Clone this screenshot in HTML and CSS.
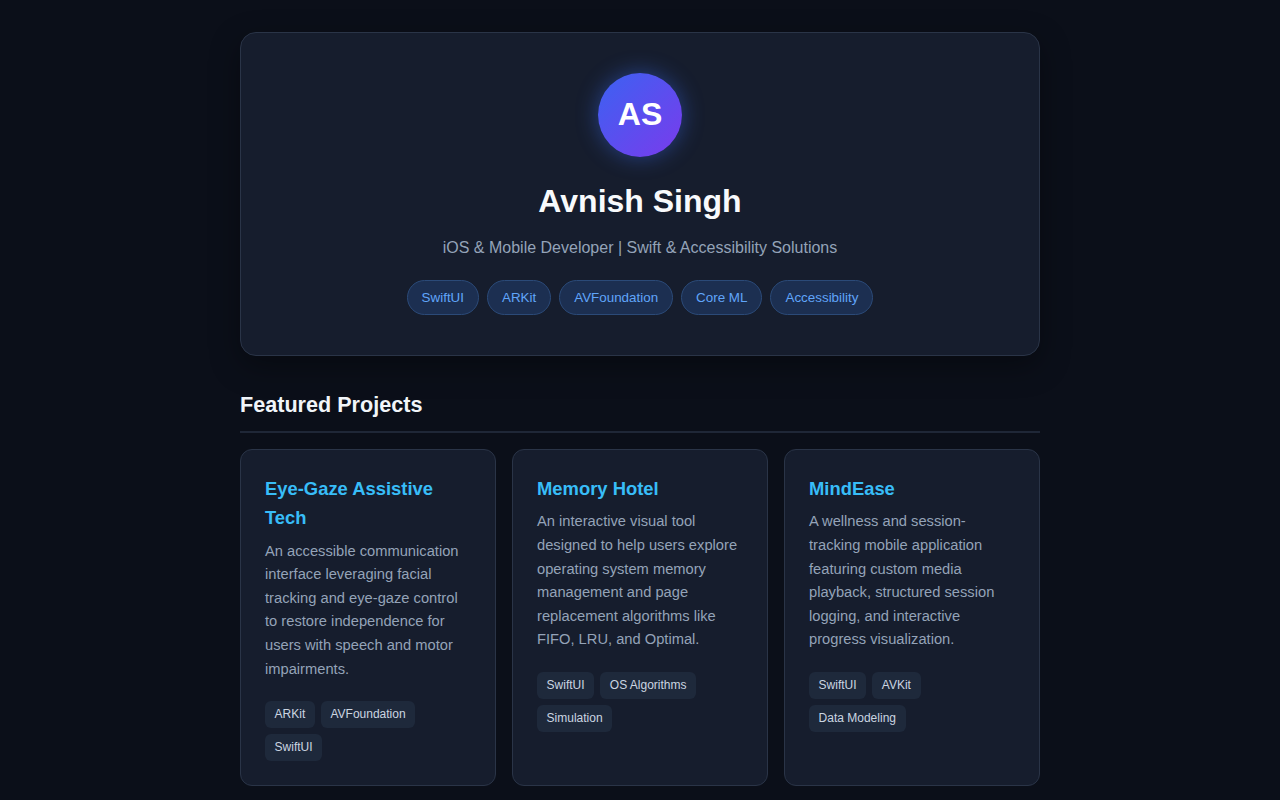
FILE: index.html
```html
<!DOCTYPE html>
<html lang="en">
<head>
<meta charset="utf-8">
<title>Avnish Singh</title>
<link rel="stylesheet" href="styles.css">
</head>
<body>
<main class="page">
  <section class="profile">
    <div class="avatar">AS</div>
    <h1 class="name">Avnish Singh</h1>
    <p class="tagline">iOS &amp; Mobile Developer | Swift &amp; Accessibility Solutions</p>
    <div class="skills">
      <span class="skill">SwiftUI</span>
      <span class="skill">ARKit</span>
      <span class="skill">AVFoundation</span>
      <span class="skill">Core ML</span>
      <span class="skill">Accessibility</span>
    </div>
  </section>

  <h2 class="section-title">Featured Projects</h2>

  <div class="projects">
    <article class="project">
      <h3 class="project-title">Eye-Gaze Assistive Tech</h3>
      <p class="project-desc">An accessible communication interface leveraging facial tracking and eye-gaze control to restore independence for users with speech and motor impairments.</p>
      <div class="tags">
        <span class="tag">ARKit</span>
        <span class="tag">AVFoundation</span>
        <span class="tag">SwiftUI</span>
      </div>
    </article>
    <article class="project">
      <h3 class="project-title">Memory Hotel</h3>
      <p class="project-desc">An interactive visual tool designed to help users explore operating system memory management and page replacement algorithms like FIFO, LRU, and Optimal.</p>
      <div class="tags">
        <span class="tag">SwiftUI</span>
        <span class="tag">OS Algorithms</span>
        <span class="tag">Simulation</span>
      </div>
    </article>
    <article class="project">
      <h3 class="project-title">MindEase</h3>
      <p class="project-desc">A wellness and session-tracking mobile application featuring custom media playback, structured session logging, and interactive progress visualization.</p>
      <div class="tags">
        <span class="tag">SwiftUI</span>
        <span class="tag">AVKit</span>
        <span class="tag">Data Modeling</span>
      </div>
    </article>
  </div>
</main>
</body>
</html>
```

FILE: styles.css
```css
* { box-sizing: border-box; }

html, body {
  margin: 0;
  padding: 0;
  background: #0b0f19;
}

body {
  font-family: "Liberation Sans", Arial, sans-serif;
  color: #e2e8f0;
}

.page {
  width: 800px;
  margin: 0 auto;
  padding: 32px 0 40px;
}

.profile {
  background: #161d2d;
  border: 1px solid #2a3447;
  border-radius: 16px;
  padding: 40px 32px 40px;
  display: flex;
  flex-direction: column;
  align-items: center;
  box-shadow: 0 10px 30px rgba(0, 0, 0, 0.35);
}

.avatar {
  width: 84px;
  height: 84px;
  border-radius: 50%;
  background: linear-gradient(135deg, #3b62f2 0%, #7a3bec 100%);
  color: #ffffff;
  font-size: 32px;
  line-height: 1;
  font-weight: 700;
  display: flex;
  align-items: center;
  justify-content: center;
  padding-bottom: 2px;
  box-shadow: 0 0 22px rgba(59, 110, 246, 0.45);
}

.name {
  margin: 24px 0 0;
  font-size: 32px;
  line-height: 40px;
  font-weight: 700;
  color: #f8fafc;
}

.tagline {
  margin: 17px 0 0;
  font-size: 16px;
  line-height: 20px;
  color: #94a3b8;
}

.skills {
  margin-top: 22px;
  display: flex;
  flex-wrap: wrap;
  justify-content: center;
  gap: 8px;
}

.skill {
  display: inline-block;
  padding: 9px 14px;
  font-size: 13.4px;
  line-height: 15px;
  color: #60a5fa;
  background: #1c2f51;
  border: 1px solid #2b4a78;
  border-radius: 999px;
}

.section-title {
  margin: 36px 0 0;
  padding-bottom: 13px;
  font-size: 21.6px;
  line-height: 26px;
  font-weight: 700;
  color: #f1f5f9;
  border-bottom: 2px solid #1f2737;
}

.projects {
  margin-top: 16px;
  display: grid;
  grid-template-columns: repeat(3, 1fr);
  gap: 16px;
}

.project {
  background: #161d2d;
  border: 1px solid #2a3447;
  border-radius: 12px;
  padding: 24px;
}

.project-title {
  margin: 0 0 7px;
  font-size: 18.4px;
  line-height: 29.4px;
  font-weight: 700;
  color: #38bdf8;
}

.project-desc {
  margin: 0;
  font-size: 14.7px;
  line-height: 23.55px;
  color: #94a3b8;
}

.tags {
  margin-top: 20px;
  display: flex;
  flex-wrap: wrap;
  gap: 6px;
}

.tag {
  display: inline-block;
  padding: 6px 9.6px;
  font-size: 12px;
  line-height: 15px;
  color: #cbd5e1;
  background: #1e293b;
  border-radius: 6px;
}
```
